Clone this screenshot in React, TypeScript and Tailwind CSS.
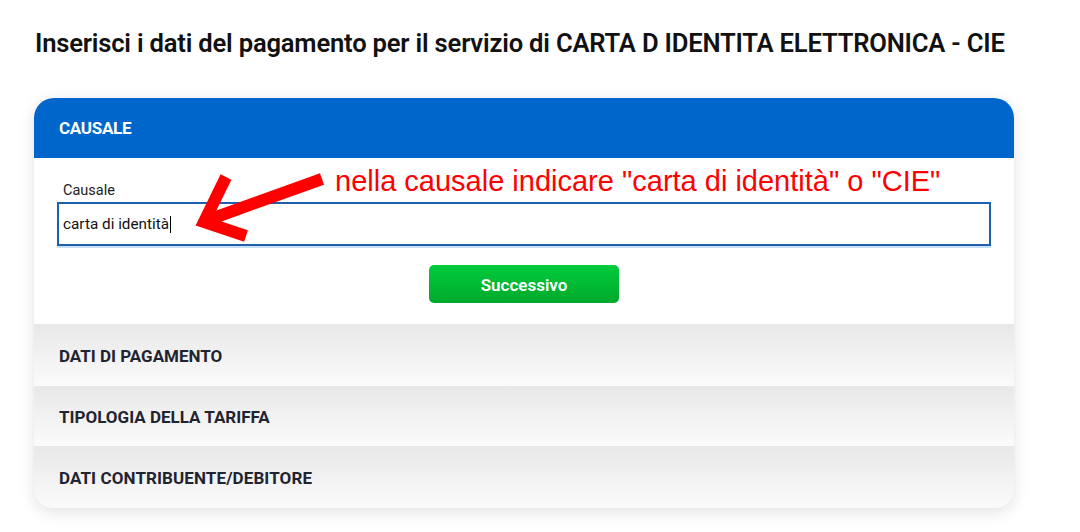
import React from "react";

export default function App() {
  return (
    <div className="relative w-[1080px] h-[532px] bg-white overflow-hidden font-['Roboto',sans-serif]">
      <div className="pl-[35px] pt-[25px]">
        <h1 className="text-[25.6px] leading-[36px] font-semibold text-[#111] tracking-[-0.2px] whitespace-nowrap">
          Inserisci i dati del pagamento per il servizio di CARTA D IDENTITA ELETTRONICA - CIE
        </h1>
      </div>
      <div className="ml-[34px] mt-[37px] w-[980px] rounded-[20px] overflow-hidden bg-white shadow-[0_4px_16px_rgba(0,0,0,0.12)]">
        <div className="h-[60px] bg-[#0066cc] flex items-center pl-[25px] pt-[2px]">
          <span className="text-white font-bold text-[17px] tracking-[-0.3px]">CAUSALE</span>
        </div>
        <div className="h-[166px] flex flex-col pt-[23px] px-[23px]">
          <label className="pl-[6px] text-[14.5px] leading-[20px] text-[#222]">Causale</label>
          <div className="mt-[1px] h-[44px] border-2 border-[#1f5fae] flex items-center pl-[4px] shadow-[0_2px_0_rgba(160,200,240,0.6)]">
            <span className="text-[15.3px] text-[#111]">carta di identità</span>
            <span className="w-[1px] h-[17px] bg-black ml-[1px]"></span>
          </div>
          <div className="flex justify-center mt-[19px]">
            <button className="w-[190px] h-[38px] rounded-[5px] bg-gradient-to-b from-[#00cc3c] to-[#00a92b] text-white font-semibold text-[17px] pt-[3px]">
              Successivo
            </button>
          </div>
        </div>
        <div className="h-[62px] flex items-center pl-[25px] pt-[3px] bg-gradient-to-b from-[#e8e8e8] to-[#fbfbfb]">
          <span className="font-bold text-[17px] text-[#1f2430] tracking-[0px]">DATI DI PAGAMENTO</span>
        </div>
        <div className="h-[60px] flex items-center pl-[25px] pt-[3px] bg-gradient-to-b from-[#e8e8e8] to-[#fbfbfb]">
          <span className="font-bold text-[17px] text-[#1f2430] tracking-[0px]">TIPOLOGIA DELLA TARIFFA</span>
        </div>
        <div className="h-[62px] flex items-center pl-[25px] pt-[3px] bg-gradient-to-b from-[#e8e8e8] to-[#fbfbfb]">
          <span className="font-bold text-[17px] text-[#1f2430] tracking-[0.1px]">DATI CONTRIBUENTE/DEBITORE</span>
        </div>
      </div>

      <div className="absolute left-[335px] top-[162px] text-[29px] leading-[38px] text-[#ff0000] font-['Liberation_Sans',sans-serif] whitespace-nowrap">
        nella causale indicare "carta di identità" o "CIE"
      </div>
      <svg className="absolute left-0 top-0 pointer-events-none" width="1080" height="532">
        <line x1="322" y1="179" x2="208" y2="220" stroke="#ff0000" strokeWidth="12" />
        <polyline points="226,177 204,222 246,236" fill="none" stroke="#ff0000" strokeWidth="12" strokeLinejoin="miter" />
      </svg>
    </div>
  );
}
